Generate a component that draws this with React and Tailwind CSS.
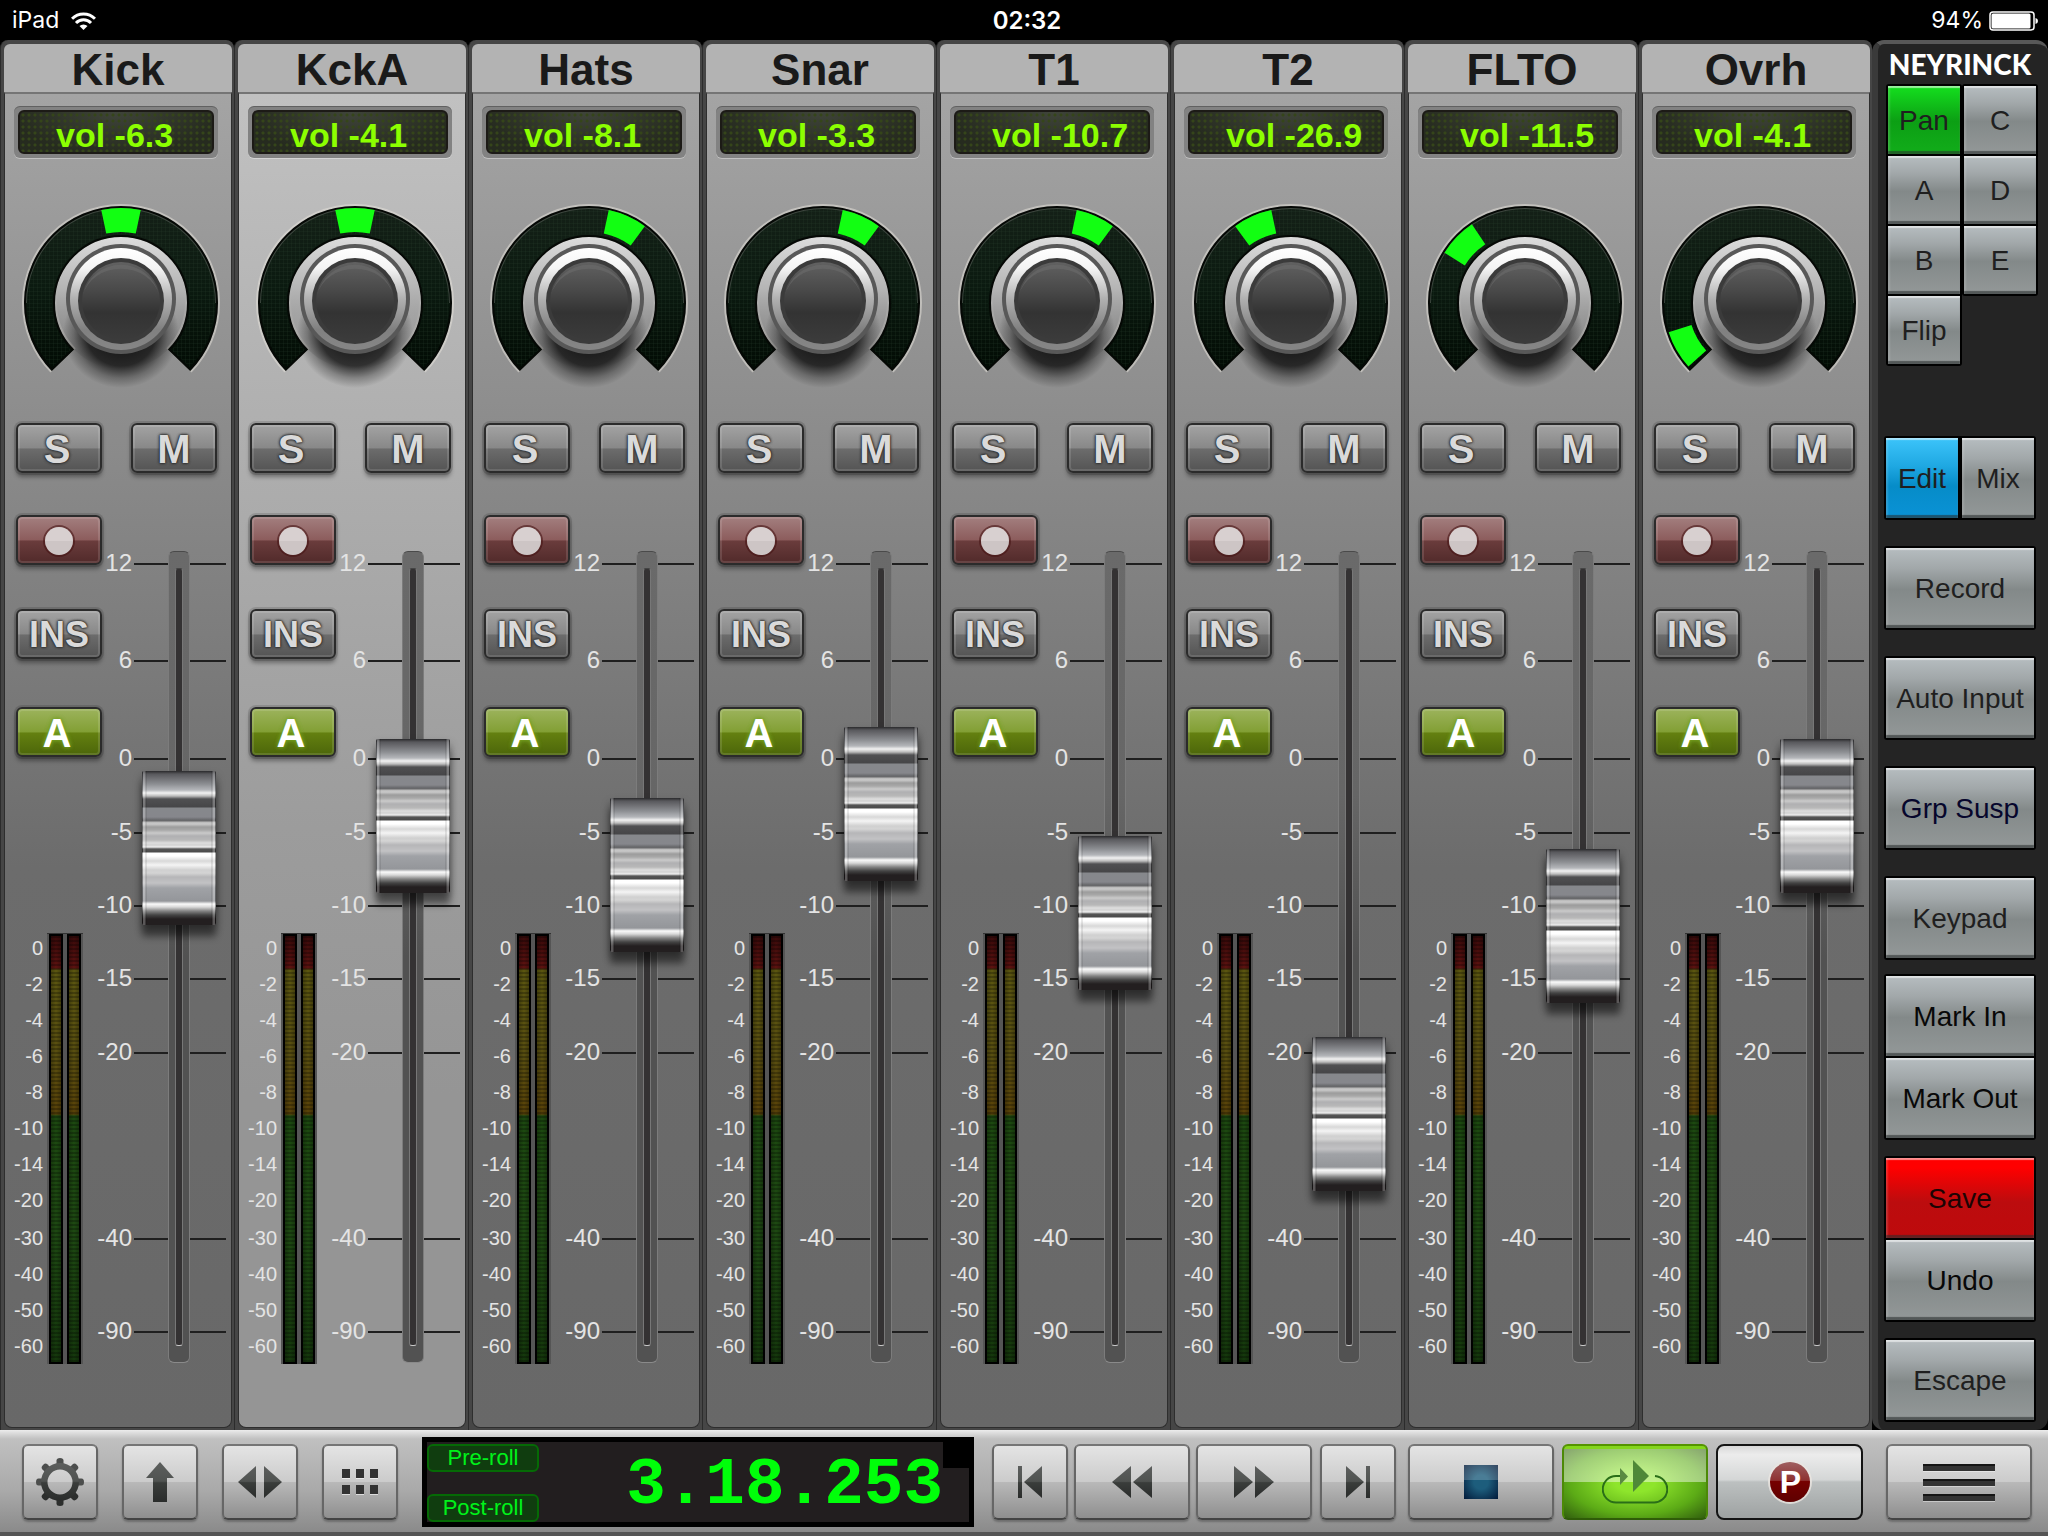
import React from 'react';

const STRIPS = [
  { name: 'Kick', vol: '-6.3', pan: 0, level: 495 },
  { name: 'KckA', vol: '-4.1', pan: 0, level: 527, selected: true },
  { name: 'Hats', vol: '-8.1', pan: 24, level: 468 },
  { name: 'Snar', vol: '-3.3', pan: 24, level: 539 },
  { name: 'T1', vol: '-10.7', pan: 24, level: 430 },
  { name: 'T2', vol: '-26.9', pan: -24, level: 229 },
  { name: 'FLTO', vol: '-11.5', pan: -46, level: 417 },
  { name: 'Ovrh', vol: '-4.1', pan: -120, level: 527 },
];

const TICKS = [
  ['12', ''],
  ['6', 'mt-[73px]'],
  ['0', 'mt-[74px]'],
  ['-5', 'mt-[50px]'],
  ['-10', 'mt-[49px]'],
  ['-15', 'mt-[49px]'],
  ['-20', 'mt-[50px]'],
  ['-40', 'mt-[162px]'],
  ['-90', 'mt-[69px]'],
];

const METER_LABELS = [
  ['0', '-mt-1'],
  ['-2', ''],
  ['-4', ''],
  ['-6', ''],
  ['-8', ''],
  ['-10', ''],
  ['-14', ''],
  ['-20', ''],
  ['-30', 'mt-[2px]'],
  ['-40', ''],
  ['-50', ''],
  ['-60', ''],
];

function polar(r, deg) {
  const a = (deg * Math.PI) / 180;
  return `${(120 + r * Math.sin(a)).toFixed(2)} ${(104 - r * Math.cos(a)).toFixed(2)}`;
}

function ring(r1, r2, from, to) {
  const large = to - from > 180 ? 1 : 0;
  return `M${polar(r1, from)} A${r1} ${r1} 0 ${large} 1 ${polar(r1, to)} L${polar(r2, to)} A${r2} ${r2} 0 ${large} 0 ${polar(r2, from)} Z`;
}

function SharedDefs() {
  return (
    <svg width="0" height="0" className="absolute" aria-hidden="true">
      <defs>
        <linearGradient id="ringFill" x1="0" y1="0" x2="0" y2="1">
          <stop offset="0" stopColor="#142017" />
          <stop offset="0.5" stopColor="#0b1a10" />
          <stop offset="1" stopColor="#020b04" />
        </linearGradient>
        <linearGradient id="well" x1="0" y1="0" x2="0" y2="1">
          <stop offset="0" stopColor="#dcdcdc" />
          <stop offset="0.4" stopColor="#b4b4b4" />
          <stop offset="0.75" stopColor="#8a8a8a" stopOpacity="0.5" />
          <stop offset="1" stopColor="#555" stopOpacity="0" />
        </linearGradient>
        <linearGradient id="chrome" x1="0" y1="0" x2="0" y2="1">
          <stop offset="0" stopColor="#ffffff" />
          <stop offset="0.2" stopColor="#f4f4f4" />
          <stop offset="0.5" stopColor="#b0b0b0" />
          <stop offset="0.8" stopColor="#808080" />
          <stop offset="1" stopColor="#868686" />
        </linearGradient>
        <linearGradient id="cap" x1="0" y1="0" x2="0" y2="1">
          <stop offset="0" stopColor="#616161" />
          <stop offset="0.35" stopColor="#4a4a4a" />
          <stop offset="0.65" stopColor="#333" />
          <stop offset="1" stopColor="#3b3b3b" />
        </linearGradient>
        <radialGradient id="knobShadow">
          <stop offset="0" stopColor="#000" stopOpacity="0.9" />
          <stop offset="0.6" stopColor="#000" stopOpacity="0.72" />
          <stop offset="0.82" stopColor="#000" stopOpacity="0.26" />
          <stop offset="1" stopColor="#000" stopOpacity="0" />
        </radialGradient>
        <linearGradient id="iconDark" x1="0" y1="0" x2="0" y2="1">
          <stop offset="0" stopColor="#5c5e5d" />
          <stop offset="0.48" stopColor="#505351" />
          <stop offset="0.52" stopColor="#3a3d3b" />
          <stop offset="1" stopColor="#2a2c2b" />
        </linearGradient>
        <radialGradient id="stopFill" cx="0.5" cy="0.5" r="0.7">
          <stop offset="0.3" stopColor="#1d5d7c" />
          <stop offset="1" stopColor="#021a3a" />
        </radialGradient>
        <pattern id="weave" width="4" height="4" patternUnits="userSpaceOnUse">
          <path d="M0 0H4M0 0V4" stroke="#2c4432" strokeOpacity="0.35" strokeWidth="1" />
        </pattern>
      </defs>
    </svg>
  );
}

function PanKnob({ name, pan }) {
  return (
    <svg className="block h-[200px] w-[234px] shrink-0" viewBox="0 0 234 200" role="img" aria-label={`${name} pan`}>
      <path d={ring(98, 65, -134, 134)} fill="none" stroke="#e4e0d8" strokeOpacity="0.55" strokeWidth="2" />
      <circle cx="120" cy="104" r="66" fill="url(#well)" />
      <ellipse cx="120" cy="134" rx="58" ry="55" fill="url(#knobShadow)" />
      <path d={ring(96, 67, -134, 134)} fill="url(#ringFill)" stroke="#050805" strokeWidth="2" />
      <path d={ring(94, 69, -133, 133)} fill="url(#weave)" />
      <path d={ring(95, 94, -90, 90)} fill="#5c625c" fillOpacity="0.6" />
      <path d={ring(95, 71, pan - 12, pan + 12)} fill="#12ff12" />
      <circle cx="120" cy="100" r="55" fill="#585858" />
      <circle cx="120" cy="100" r="51" fill="url(#chrome)" />
      <circle cx="120" cy="102" r="43" fill="#3b3b3b" />
      <circle cx="120" cy="102" r="39" fill="url(#cap)" />
      <path d="M82 96A39 39 0 0 1 158 96A39 34 0 0 0 82 96Z" fill="#6d6d6d" fillOpacity="0.55" />
    </svg>
  );
}

const KEY_BASE =
  'flex h-[50px] w-[86px] shrink-0 items-center justify-center rounded-md border-2 border-[#2b2b2b] pt-[2px] font-bold leading-none shadow-[0_0_0_2px_rgba(0,0,0,0.13),0_4px_4px_rgba(0,0,0,0.35),inset_0_0_0_2px_rgba(255,255,255,0.12)]';
const GREY_KEY =
  'bg-[linear-gradient(#a3a3a3,#888_50%,#6c6c6c_52%,#545454)] text-[#dadada] [text-shadow:0_0_2px_#222,0_0_3px_#333,0_0_3px_#333]';
const RED_KEY = 'bg-[linear-gradient(#a37f7f,#8c5c5c_50%,#6a3c3c_52%,#512a2a)]';
const GREEN_KEY =
  'bg-[linear-gradient(#9cb35c,#829f34_50%,#648010_52%,#4c660a)] text-white [text-shadow:0_0_4px_#74a020,0_0_4px_#74a020]';

function Meter() {
  return (
    <span className="block h-[430px] w-[14px] border-2 border-black bg-[repeating-linear-gradient(rgba(0,0,0,0.25)_0_2px,transparent_2px_4px),linear-gradient(90deg,rgba(0,0,0,0.25),transparent_50%,rgba(0,0,0,0.25)),linear-gradient(#3a0a0a,#5e1210_32px,#5c5710_34px,#5a5010_120px,#5a4308_178px,#1d4a10_180px,#1e4a12_70%,#15380c)]" />
  );
}

function Strip({ strip }) {
  const { name, vol, pan, level, selected } = strip;
  return (
    <section
      aria-label={name}
      className="flex flex-col rounded-t-lg border-l border-[#2c2c2c] bg-[#464646] pb-[2px] pl-[3px] pr-[2px] pt-1"
    >
      <h2 className="flex h-12 shrink-0 items-center justify-center rounded-t-md bg-[#b3b3b3] pt-1 text-[44px] font-bold leading-none text-[#1a1a1a]">
        {name}
      </h2>
      <div
        className={
          'flex flex-1 flex-col rounded-b-lg border-x border-t-2 border-b border-x-[#2e2e2e] border-t-[#757575] border-b-[#2e2e2e] pb-[60px] ' +
          (selected
            ? 'bg-[linear-gradient(#c1c1c1,#b0b0b0_24%,#9c9c9c_55%,#959595_75%)]'
            : 'bg-[linear-gradient(#a4a4a4,#8d8d8d_24%,#6c6c6c_58%,#686868)]')
        }
      >
        <div className="ml-[9px] mr-[13px] mt-3 h-[52px] shrink-0 rounded-md bg-[#828282] p-1 shadow-[0_1px_0_rgba(255,255,255,0.35),inset_0_1px_0_rgba(0,0,0,0.25)]">
          <output className="flex h-11 items-center whitespace-pre rounded-md border-2 border-[#1c1a16] bg-[radial-gradient(circle,#35451a_1px,transparent_2px),radial-gradient(ellipse_at_50%_0%,#3f443a,#262b1f_75%)] bg-[size:6px_6px,100%_100%] pl-9 pt-[6px] text-[34px] font-bold leading-none text-[#8cff00]">
            {'vol ' + vol}
          </output>
        </div>
        <div className="-mx-[5px] mt-[41px] flex justify-center">
          <PanKnob name={name} pan={pan} />
        </div>
        <div className="ml-[11px] mr-[14px] mt-6 flex justify-between">
          <button type="button" aria-label={`Solo ${name}`} className={`${KEY_BASE} ${GREY_KEY} pr-1 text-[40px]`}>
            S
          </button>
          <button type="button" aria-label={`Mute ${name}`} className={`${KEY_BASE} ${GREY_KEY} text-[40px]`}>
            M
          </button>
        </div>
        <div className="relative mt-[42px] flex justify-between pr-[5px]">
          <div className="flex w-[93px] shrink-0 flex-col pl-[11px]">
            <button type="button" aria-label={`Record arm ${name}`} className={`${KEY_BASE} ${RED_KEY}`}>
              <span className="h-7 w-7 rounded-full bg-[linear-gradient(#d8d0d0_50%,#cdc5c5_50%)] shadow-[0_0_0_2px_rgba(70,20,20,0.6)]" />
            </button>
            <button type="button" className={`${KEY_BASE} ${GREY_KEY} mt-11 text-[36px]`}>
              INS
            </button>
            <button type="button" aria-label={`Automation ${name}`} className={`${KEY_BASE} ${GREEN_KEY} mt-12 pr-1 text-[40px]`}>
              A
            </button>
            <div className="-ml-2 mt-[177px] flex w-[75px] justify-between">
              <ul className="flex w-[35px] flex-col text-right text-[20px] leading-9 text-[#e4e4e4]">
                {METER_LABELS.map(([label, gap]) => (
                  <li key={label} className={gap}>
                    {label}
                  </li>
                ))}
              </ul>
              <div className="flex h-[430px] w-9 justify-between bg-[#555] px-[2px] shadow-[0_-1px_0_#333]">
                <Meter />
                <Meter />
              </div>
            </div>
          </div>
          <div className="relative w-[123px] shrink-0">
            <ul className="mt-[37px] text-[24px] leading-6 text-[#e4e4e4]">
              {TICKS.map(([label, gap]) => (
                <li key={label} className={`flex h-6 items-center ${gap}`}>
                  <span className="flex w-[29px] shrink-0 justify-end pb-[2px]">{label}</span>
                  <span className="ml-[2px] h-[2px] w-[92px] bg-[#1f1f1f]" />
                </li>
              ))}
            </ul>
            <div className="absolute left-[65px] top-9 flex h-[812px] w-[22px] justify-center rounded-md border border-t-[#4a4a4a] border-x-[#7c7c7c] border-b-[#8a8a8a] bg-[linear-gradient(#6a6a6a,#666_30%,#525252_50%,#525252)] pt-4">
              <span className="h-[778px] w-2 rounded-[3px] border border-t-[#444] border-x-[#777] border-b-[#c8c8c8] bg-[#343233]" />
            </div>
            <input
              type="range"
              min="0"
              max="782"
              defaultValue={level}
              aria-label={`${name} volume`}
              className="absolute -top-[31px] left-[39px] m-0 h-[936px] w-[74px] appearance-none bg-transparent [direction:rtl] [writing-mode:vertical-lr] [&::-webkit-slider-thumb]:h-[154px] [&::-webkit-slider-thumb]:w-[74px] [&::-webkit-slider-thumb]:appearance-none [&::-webkit-slider-thumb]:rounded-[2px] [&::-webkit-slider-thumb]:bg-[linear-gradient(90deg,rgba(0,0,0,0.35)_0_1px,rgba(255,255,255,0.25)_1px_3px,rgba(0,0,0,0.18)_4px,transparent_5px_69px,rgba(0,0,0,0.18)_70px,rgba(255,255,255,0.25)_71px_73px,rgba(0,0,0,0.35)_73px),linear-gradient(#2a2a2c,#58585c_3px,#8c8e92_13px,#b4b6ba_19px,#f2f2f2_22px,#bcbcbc_25px,#505052_28px,#464648_36px,#86888c_37px,#86878c_46px,#66676a_49px,#6a6a6c_50px,#b8b8b8_51px,#cacaca_53px,#9c9c9c_56px,#a8a8a8_59px,#cacaca_62px,#b0b0b2_65px,#b8b8b8_69px,#dedede_72px,#d2d2d2_74px,#eee_76px,#555_78px,#4a4a4a_81px,#fff_82px,#fff_85px,#d8d8d8_90px,#f4f4f4_94px,#d0d0d0_99px,#d4d4d4_102px,#b6b6b8_106px,#c2c2c4_112px,#a0a2a6_117px,#94969a_130px,#fafafa_133px,#d8d8d8_136px,#848484_140px,#444_144px,#231f20_148px,#231f20)] [&::-webkit-slider-thumb]:shadow-[0_12px_7px_rgba(0,0,0,0.4),0_5px_8px_rgba(0,0,0,0.35)]"
            />
          </div>
        </div>
      </div>
    </section>
  );
}

const PAD =
  'flex w-full items-center justify-center whitespace-nowrap pt-[2px] text-[28px] leading-none shadow-[inset_0_2px_1px_rgba(255,255,255,0.55),inset_0_-3px_1px_rgba(40,45,45,0.6),inset_2px_0_2px_rgba(255,255,255,0.15)]';
const PAD_GREY = 'bg-[linear-gradient(#b6bdc0,#a2a8aa_25%,#838989_52%,#939898)]';
const PAD_GREEN = 'bg-[linear-gradient(#14e01e,#0c9f14_52%,#12ad1a)]';
const PAD_BLUE = 'bg-[linear-gradient(#3cc4fa,#1fa8e2_35%,#068cc8_60%,#0a92d6)]';
const PAD_RED = 'bg-[linear-gradient(#ff0000_12%,#bc0c0e_55%,#be0a0c)]';

function Pad({ children, tone = PAD_GREY, size = 'h-20', text = 'text-[#1f1f1f]' }) {
  return (
    <button type="button" className={`${PAD} ${tone} ${size} ${text}`}>
      {children}
    </button>
  );
}

function PadBox({ children, gap = '' }) {
  return <div className={`flex flex-col gap-[2px] rounded-[3px] bg-black p-[2px] ${gap}`}>{children}</div>;
}

function Sidebar() {
  return (
    <aside className="flex w-44 shrink-0 flex-col rounded-t-xl rounded-b-xl border-l-[6px] border-t-4 border-l-[#3a3a3a] border-t-[#585858] bg-[#242424] pb-2 pl-[6px] pr-3">
      <div className="flex h-10 items-center justify-center font-['Lato'] text-[28px] font-black leading-none text-white">NEYRINCK</div>
      <div className="-mr-[2px] ml-[2px] flex items-start">
        <div className="w-1/2">
          <PadBox>
            <Pad size="h-[68px]" tone={PAD_GREEN}>Pan</Pad>
            <Pad size="h-[68px]">A</Pad>
            <Pad size="h-[68px]">B</Pad>
            <Pad size="h-[68px]">Flip</Pad>
          </PadBox>
        </div>
        <div className="w-1/2">
          <PadBox>
            <Pad size="h-[68px]">C</Pad>
            <Pad size="h-[68px]">D</Pad>
            <Pad size="h-[68px]">E</Pad>
          </PadBox>
        </div>
      </div>
      <div className="mt-[70px] flex gap-1 rounded-[3px] bg-black p-[2px]">
        <Pad tone={PAD_BLUE}>Edit</Pad>
        <Pad>Mix</Pad>
      </div>
      <PadBox gap="mt-[26px]"><Pad>Record</Pad></PadBox>
      <PadBox gap="mt-[26px]"><Pad>Auto Input</Pad></PadBox>
      <PadBox gap="mt-[26px]"><Pad text="text-[#06062c]">Grp Susp</Pad></PadBox>
      <PadBox gap="mt-[26px]"><Pad>Keypad</Pad></PadBox>
      <PadBox gap="mt-[14px]">
        <Pad text="text-[#080808]">Mark In</Pad>
        <Pad text="text-[#080808]">Mark Out</Pad>
      </PadBox>
      <PadBox gap="mt-4">
        <Pad tone={PAD_RED} text="text-[#1c0404]">Save</Pad>
        <Pad text="text-[#080808]">Undo</Pad>
      </PadBox>
      <PadBox gap="mt-4"><Pad>Escape</Pad></PadBox>
    </aside>
  );
}

const TOOL =
  'flex h-[76px] shrink-0 items-center justify-center rounded-md border-2 border-t-[#767676] border-x-[#666] border-b-[#444] bg-[linear-gradient(#e4e4e4,#cbcbcb_50%,#b9b9b9_50%,#8f8f8f)] shadow-[0_2px_2px_rgba(0,0,0,0.25)]';

function Tool({ label, size, children }) {
  return (
    <button type="button" aria-label={label} className={`${TOOL} ${size}`}>
      {children}
    </button>
  );
}

function Icon({ w, h, children }) {
  return (
    <svg width={w} height={h} viewBox={`0 0 ${w} ${h}`} fill="url(#iconDark)" aria-hidden="true">
      {children}
    </svg>
  );
}

const ROLL =
  'h-7 rounded-md border-2 border-[#056a05] bg-[#103d0f] text-[22px] leading-none text-[#00f21a]';

function Toolbar() {
  return (
    <footer className="flex h-[106px] shrink-0 items-start border-b-4 border-[#555] bg-[linear-gradient(#ececec,#dcdcdc_3px,#c0c0c0_9px,#a9a9a9_60%,#8a8a8a)] pl-[22px] pr-4 pt-[7px]">
      <div className="mt-[7px] flex gap-6">
        <Tool label="Settings" size="w-[76px]">
          <Icon w={50} h={50}>
            {[0, 45, 90, 135, 180, 225, 270, 315].map((a) => (
              <path key={a} d="M21.500 9V3.500Q21.500 1 25 1Q28.500 1 28.500 3.500V9Z" transform={`rotate(${a} 25 25)`} fill={a > 90 && a < 270 ? '#2c2e2d' : '#4c4e4d'} />
            ))}
            <path fillRule="evenodd" d="M25 6A19 19 0 1 1 25 44A19 19 0 1 1 25 6ZM25 12.500A12.500 12.500 0 1 0 25 37.500A12.500 12.500 0 1 0 25 12.500Z" />
          </Icon>
        </Tool>
        <Tool label="Up" size="w-[76px]">
          <Icon w={28} h={40}>
            <path d="M14 0L28 16H21V40H7V16H0Z" />
          </Icon>
        </Tool>
        <Tool label="Bank left and right" size="w-[76px]">
          <Icon w={44} h={32}>
            <path d="M18 0V32L0 16ZM26 0V32L44 16Z" />
          </Icon>
        </Tool>
        <Tool label="Grid" size="w-[76px]">
          <Icon w={36} h={26}>
            <path fill="#fff" fillOpacity="0.6" d="M0 1h8v9H0zM14 1h8v9h-8zM28 1h8v9h-8zM0 17h8v9H0zM14 17h8v9h-8zM28 17h8v9h-8z" />
            <path fill="#333" d="M0 0h8v9H0zM14 0h8v9h-8zM28 0h8v9h-8zM0 16h8v9H0zM14 16h8v9h-8zM28 16h8v9h-8z" />
          </Icon>
        </Tool>
      </div>
      <div className="ml-6 flex h-[90px] flex-1 border-[5px] border-black bg-[#221e1f]">
        <div className="flex w-[112px] flex-col justify-between pt-[2px]">
          <button type="button" className={ROLL}>Pre-roll</button>
          <button type="button" className={ROLL}>Post-roll</button>
        </div>
        <output className="flex flex-1 items-center justify-end pt-2 font-['Liberation_Mono',monospace] text-[66px] font-bold leading-none text-[#00ff0a]">
          3.18.253
        </output>
        <div className="h-[26px] w-[26px] bg-black" />
      </div>
      <div className="mt-[7px] flex">
        <Tool label="Return to start" size="ml-[18px] w-[76px]">
          <Icon w={24} h={32}>
            <path d="M0 0H4V32H0ZM24 0V32L6 16Z" />
          </Icon>
        </Tool>
        <Tool label="Rewind" size="ml-[6px] w-[116px]">
          <Icon w={40} h={32}>
            <path d="M19 0V32L0 16ZM40 0V32L21 16Z" />
          </Icon>
        </Tool>
        <Tool label="Fast forward" size="ml-[6px] w-[116px]">
          <Icon w={40} h={32}>
            <path d="M0 0V32L19 16ZM21 0V32L40 16Z" />
          </Icon>
        </Tool>
        <Tool label="Go to end" size="ml-2 w-[76px]">
          <Icon w={24} h={32}>
            <path d="M0 0V32L18 16ZM20 0H24V32H20Z" />
          </Icon>
        </Tool>
        <Tool label="Stop" size="ml-3 w-[146px]">
          <Icon w={34} h={34}>
            <rect width="34" height="34" fill="url(#stopFill)" />
            <rect width="34" height="15" fill="#fff" fillOpacity="0.2" />
          </Icon>
        </Tool>
        <button
          type="button"
          aria-label="Loop playback"
          className="ml-2 flex h-[76px] w-[146px] items-center justify-center rounded-md border-2 border-t-[#559400] border-x-[#4c8a06] border-b-[#2f5c08] bg-[linear-gradient(#84d61c_3px,rgba(255,255,255,0.4)_3px,rgba(255,255,255,0.45)_50%,transparent_50%),radial-gradient(ellipse_at_50%_50%,#8ee52c_20%,#5cab16_65%,#315e0e)]"
        >
          <Icon w={66} h={48}>
            <path d="M18 18H14A13 13 0 0 0 14 44.500H51A13 13 0 0 0 53 18" fill="none" stroke="#2a6e18" strokeWidth="2" />
            <path d="M18 10V27L26 18.500Z" fill="#5a8a42" />
            <path d="M31 2V34L47 18Z" fill="#4f8838" />
          </Icon>
        </button>
        <button
          type="button"
          aria-label="Pro Tools status"
          className="ml-2 flex h-[76px] w-[147px] items-center justify-center rounded-lg border-2 border-[#141414] bg-[linear-gradient(#d8d8d8,#ececec_12%,#d4d6d6_47%,#bcc0c0_50%,#9ea2a2)]"
        >
          <span className="flex h-10 w-10 items-center justify-center rounded-full bg-[linear-gradient(#a06060,#8e3232_46%,#760000_48%,#5e0000)] pl-[2px] text-[32px] font-bold leading-none text-white shadow-[0_0_0_2px_rgba(235,230,225,0.8)]">
            P
          </span>
        </button>
        <Tool label="Menu" size="ml-[23px] w-[146px]">
          <span className="flex w-[72px] flex-col gap-2">
            <span className="h-[7px] border-t-2 border-[#151515] bg-[#333] shadow-[0_1px_0_rgba(255,255,255,0.4)]" />
            <span className="h-[7px] border-t-2 border-[#151515] bg-[#333] shadow-[0_1px_0_rgba(255,255,255,0.4)]" />
            <span className="h-[7px] border-t-2 border-[#151515] bg-[#333] shadow-[0_1px_0_rgba(255,255,255,0.4)]" />
          </span>
        </Tool>
      </div>
    </footer>
  );
}

function StatusBar() {
  return (
    <header className="grid h-10 shrink-0 grid-cols-3 items-center bg-black pl-3 pr-[10px] pt-px font-['Inter'] text-[23px] leading-none text-white">
      <div className="flex items-center gap-3">
        <span>iPad</span>
        <svg width="25" height="18" viewBox="0 0 25 18" aria-label="Wi-Fi">
          <path d="M1 6.800A16 16 0 0 1 24 6.800" fill="none" stroke="#fff" strokeWidth="3" />
          <path d="M5 11A10.500 10.500 0 0 1 20 11" fill="none" stroke="#fff" strokeWidth="3" />
          <path d="M8.500 14A5.800 5.800 0 0 1 16.500 14L12.500 18Z" fill="#fff" />
        </svg>
      </div>
      <div className="pl-1 text-center text-[24px] font-semibold">02:32</div>
      <div className="flex items-center justify-end gap-[6px]">
        <span>94%</span>
        <svg width="49" height="20" viewBox="0 0 49 20" aria-label="Battery">
          <rect x="1" y="1" width="44" height="18" rx="3" fill="none" stroke="#fff" strokeWidth="1.500" />
          <rect x="2.500" y="2.500" width="39" height="15" rx="1.500" fill="#fff" />
          <path d="M46.500 7Q49 7.500 49 10Q49 12.500 46.500 13Z" fill="#fff" />
        </svg>
      </div>
    </header>
  );
}

export default function App() {
  return (
    <div className="flex min-h-screen flex-col bg-black font-['Liberation_Sans',Arial,sans-serif]">
      <SharedDefs />
      <StatusBar />
      <main className="flex flex-1">
        <div className="grid flex-1 grid-cols-8">
          {STRIPS.map((s) => (
            <Strip key={s.name} strip={s} />
          ))}
        </div>
        <Sidebar />
      </main>
      <Toolbar />
    </div>
  );
}
